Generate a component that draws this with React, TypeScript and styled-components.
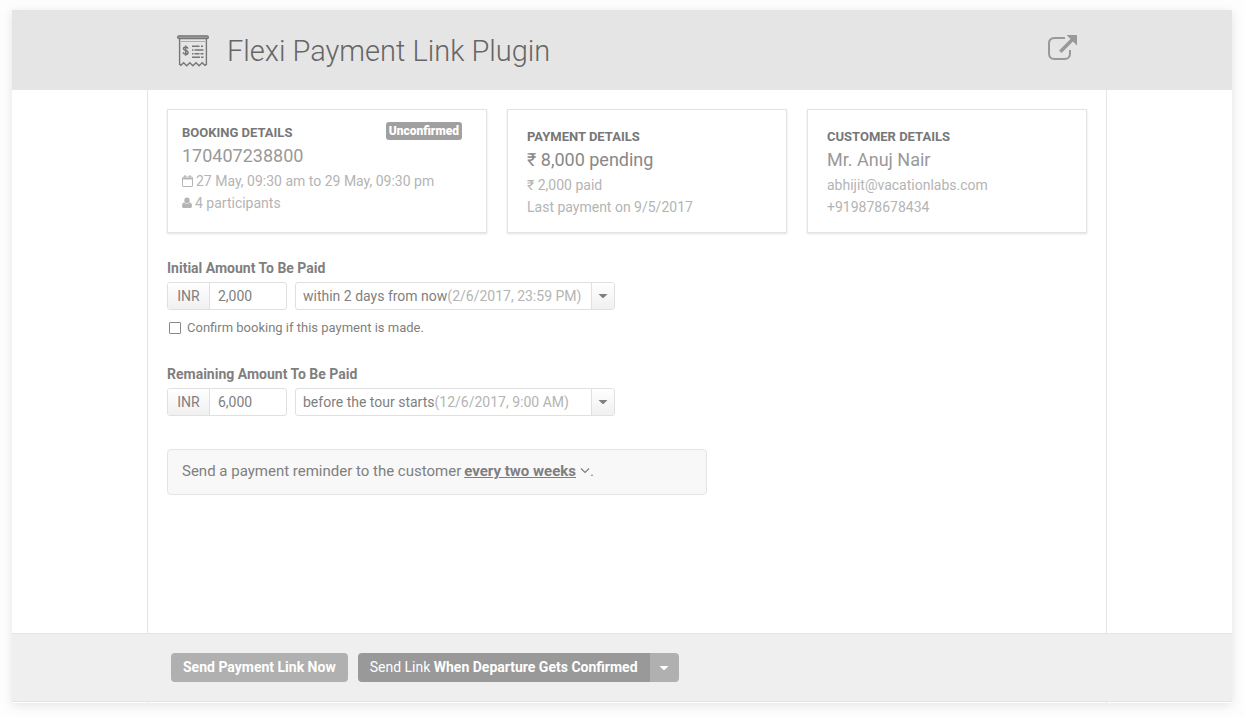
import React, { useRef, useState } from "react";
import styled, { createGlobalStyle } from "styled-components";

const GlobalStyle = createGlobalStyle`
  * { box-sizing: border-box; }
  body {
    margin: 0;
    background: #fdfdfd;
    color: #7f7f7f;
    font-family: Roboto, "Liberation Sans", sans-serif;
    font-size: 14px;
    line-height: 22px;
  }
  h1, h2, p { margin: 0; }
  button, input, select { font: inherit; color: inherit; }
`;

const Shell = styled.div`
  display: flex;
  flex-direction: column;
  min-height: calc(100vh - 24px);
  margin: 10px 12px 14px;
  background: #fff;
  box-shadow: 0 2px 10px rgba(0, 0, 0, 0.1);
`;

const Band = styled.div`
  display: flex;
  justify-content: center;
  padding-left: 10px;
`;

const HeaderBand = styled(Band).attrs({ as: "header" })`
  background: #e5e5e5;
`;

const BodyBand = styled(Band).attrs({ as: "main" })`
  flex: 1;
`;

const FooterBand = styled(Band).attrs({ as: "footer" })`
  background: #efefef;
  border: solid #e4e4e4;
  border-width: 1px 0;
`;

const Column = styled.div`
  width: 100%;
  max-width: 960px;
  border: solid #e4e4e4;
  border-width: 0 1px;
`;

const Content = styled(Column)`
  padding: 19px 19px 40px;
`;

const Tail = styled(Column)`
  height: 1px;
`;

const HeaderRow = styled.div`
  display: flex;
  align-items: center;
  width: 100%;
  max-width: 960px;
  height: 80px;
  padding: 2px 29px 0 30px;
`;

const Title = styled.h1`
  flex: 1;
  margin-left: 18px;
  color: #666;
  font-size: 29px;
  font-weight: 300;
  line-height: 40px;
`;

const OpenLink = styled.a`
  display: block;
  height: 32px;
  color: #999;
`;

const Cards = styled.div`
  display: grid;
  grid-template-columns: 320fr 280fr 280fr;
  gap: 20px;
`;

const Card = styled.section<{ $compact?: boolean }>`
  min-height: 124px;
  padding: ${(p) => (p.$compact ? "12px 14px" : "16px 19px 12px")};
  border: 1px solid #e4e4e4;
  box-shadow: 0 1px 2px rgba(0, 0, 0, 0.12);
`;

const CardHead = styled.div`
  display: flex;
  justify-content: space-between;
  padding-right: 10px;
`;

const CardTitle = styled.h2`
  color: #777;
  font-size: 13px;
  font-weight: 700;
  line-height: 22px;
`;

const Badge = styled.span`
  height: 18px;
  padding: 0 3px;
  border-radius: 3px;
  background: #a0a0a0;
  color: #fff;
  font-size: 12px;
  font-weight: 900;
  line-height: 18px;
`;

const Lead = styled.p<{ $strong?: boolean }>`
  margin-bottom: 2px;
  color: ${(p) => (p.$strong ? "#888" : "#999")};
  font-size: 18px;
  line-height: 24px;
`;

const Detail = styled.p`
  display: flex;
  align-items: center;
  gap: 3px;
  color: #b4b4b4;
`;

const Field = styled.div`
  margin-top: 24px;
`;

const FieldLabel = styled.label`
  display: block;
  margin-bottom: 3px;
  font-weight: 700;
`;

const FieldRow = styled.div`
  display: flex;
  flex-wrap: wrap;
  gap: 8px;
`;

const Group = styled.div<{ $width: number }>`
  display: flex;
  width: ${(p) => p.$width}px;
  height: 28px;
  border: 1px solid #e0e0e0;
  border-radius: 3px;
  background: #fff;
  overflow: hidden;
`;

const Prefix = styled.span`
  width: 42px;
  border-right: 1px solid #e0e0e0;
  background: linear-gradient(#fff, #f0f0f0);
  line-height: 26px;
  text-align: center;
`;

const AmountInput = styled.input`
  flex: 1;
  min-width: 0;
  padding: 0 8px;
  border: 0;
  background: none;
`;

const BareSelect = styled.select`
  appearance: none;
  field-sizing: content;
  padding: 0;
  border: 0;
  background: none;
  cursor: pointer;
`;

const DueSelect = styled(BareSelect)`
  margin-left: 7px;
`;

const DueDate = styled.span`
  flex: 1;
  color: #b4b4b4;
  line-height: 26px;
  white-space: nowrap;
`;

const CaretButton = styled.button`
  display: flex;
  align-items: center;
  justify-content: center;
  width: 23px;
  padding: 0;
  border: 0;
  border-left: 1px solid #e0e0e0;
  background: linear-gradient(#fff, #f0f0f0);
  cursor: pointer;
`;

const CheckRow = styled.label`
  display: flex;
  align-items: center;
  gap: 6px;
  margin: 7px 0 0 2px;
  font-size: 13px;
`;

const CheckBox = styled.input`
  appearance: none;
  width: 12px;
  height: 12px;
  margin: 0;
  border: 1px solid #888;
  border-radius: 1px;
  &:checked { background: #888; }
`;

const Reminder = styled.div`
  display: flex;
  align-items: center;
  max-width: 540px;
  min-height: 46px;
  margin-top: 33px;
  padding: 0 14px 2px;
  border: 1px solid #e4e4e4;
  border-radius: 4px;
  background: #f8f8f8;
  font-size: 15px;
`;

const PeriodSelect = styled(BareSelect)`
  margin: 0 4px 0 3px;
  font-weight: 700;
  text-decoration: underline;
`;

const Actions = styled.div`
  display: flex;
  flex-wrap: wrap;
  align-items: center;
  gap: 10px;
  width: 100%;
  max-width: 960px;
  min-height: 67px;
  padding: 0 24px;
`;

const ActionButton = styled.button<{ $dark?: boolean }>`
  height: 29px;
  padding: 0 12px 2px;
  border: 0;
  border-radius: 4px;
  background: ${(p) => (p.$dark ? "#999" : "#b0b0b0")};
  color: #fff;
  font-weight: ${(p) => (p.$dark ? 400 : 700)};
  cursor: pointer;
`;

const SplitButton = styled.div`
  display: flex;
  border-radius: 4px;
  overflow: hidden;
  & > ${ActionButton} { border-radius: 0; }
`;

const SplitCaret = styled(ActionButton)`
  display: flex;
  align-items: center;
  justify-content: center;
  width: 29px;
  padding: 0;
  border-radius: 0;
`;

const Caret = () => (
  <svg width="10" height="6" viewBox="0 0 10 6" aria-hidden="true">
    <path d="M.5 1h9L5.500 5h-1z" fill="currentColor" />
  </svg>
);

const Chevron = () => (
  <svg width="10" height="8" viewBox="0 0 10 8" aria-hidden="true">
    <path d="M1 1.500l4 3.900 4-3.900" fill="none" stroke="currentColor" strokeWidth="1.2" />
  </svg>
);

const ReceiptIcon = () => (
  <svg width="32" height="32" viewBox="0 0 32 32" fill="none" stroke="#777" aria-hidden="true">
    <rect x=".6" y=".8" width="30.800" height="2.800" rx="1.400" fill="#999" strokeWidth="1.200" />
    <path d="M2.600 3.500v25.800l1.300 1 2.700-2.500 3.100 3 3.100-3 3.100 3 3.100-3 3.100 3 3.100-3 2.700 2.500 1.500-1V3.500" strokeWidth="1.400" />
    <path d="M4.500 6.500h24" strokeDasharray="1 1" strokeWidth="1.200" />
    <path d="M15 11.200h7.500M24 11.200h2M15 15h1.500M17.500 15h9M15 18.700h1.500M17.500 18.700h5M23.500 18.700h3M15 22.300h8M24 22.300h2.500" strokeWidth="1.500" />
    <path d="M11 13.700c-.2-1.200-1.100-1.700-2.300-1.700-1.300 0-2.200.7-2.200 1.800 0 2.500 4.600 1 4.600 3.600 0 1.100-1 1.800-2.300 1.800-1.400 0-2.400-.7-2.500-2M8.700 10.500v10.200" strokeWidth="1.500" />
  </svg>
);

const ExternalIcon = () => (
  <svg width="30" height="32" viewBox="0 0 30 32" fill="none" stroke="currentColor" aria-hidden="true">
    <path d="M17 3H6.500Q1 3 1 8.500v10Q1 24 6.500 24h10q5.500 0 5.500-5.500V15" strokeWidth="2" />
    <path d="M12.300 16.700L25 4" strokeWidth="3.400" />
    <path d="M18.500 0h10.500v10.500z" fill="currentColor" stroke="none" />
  </svg>
);

const CalendarIcon = () => (
  <svg width="11" height="12" viewBox="0 0 11 12" fill="none" stroke="currentColor" aria-hidden="true">
    <rect x=".5" y="2" width="10" height="9.500" rx=".6" />
    <path d="M.5 3.700h10" strokeWidth="1.500" />
    <path d="M3 .3v2.500M8 .3v2.500" strokeWidth="1.500" />
  </svg>
);

const PersonIcon = () => (
  <svg width="10" height="12" viewBox="0 0 10 12" fill="currentColor" aria-hidden="true">
    <ellipse cx="5" cy="3.400" rx="2.700" ry="2.900" />
    <path d="M2.300 5.400C.7 5.600 0 7 0 8.900 0 10.200.8 11 1.900 11h6.200C9.200 11 10 10.200 10 8.900 10 7 9.300 5.600 7.700 5.400 7 6.300 6 6.800 5 6.800S3 6.300 2.300 5.400z" />
  </svg>
);

type Choice = { label: string; date: string };

type AmountFieldProps = {
  id: string;
  label: string;
  amount: string;
  choices: Choice[];
  children?: React.ReactNode;
};

function AmountField({ id, label, amount, choices, children }: AmountFieldProps) {
  const [index, setIndex] = useState(0);
  const selectRef = useRef<HTMLSelectElement>(null);
  return (
    <Field>
      <FieldLabel htmlFor={id}>{label}</FieldLabel>
      <FieldRow>
        <Group $width={120}>
          <Prefix>INR</Prefix>
          <AmountInput id={id} type="text" inputMode="numeric" defaultValue={amount} />
        </Group>
        <Group $width={320}>
          <DueSelect
            ref={selectRef}
            aria-label={`${label}: due date`}
            value={index}
            onChange={(e) => setIndex(Number(e.target.value))}
          >
            {choices.map((c, i) => (
              <option key={c.label} value={i}>{c.label}</option>
            ))}
          </DueSelect>
          <DueDate>({choices[index].date})</DueDate>
          <CaretButton type="button" aria-label="Choose due date" onClick={() => selectRef.current?.showPicker()}>
            <Caret />
          </CaretButton>
        </Group>
      </FieldRow>
      {children}
    </Field>
  );
}

export default function App() {
  return (
    <>
      <GlobalStyle />
      <Shell>
        <HeaderBand>
          <HeaderRow>
            <ReceiptIcon />
            <Title>Flexi Payment Link Plugin</Title>
            <OpenLink href="#" aria-label="Open in new window">
              <ExternalIcon />
            </OpenLink>
          </HeaderRow>
        </HeaderBand>

        <BodyBand>
          <Content>
            <Cards>
              <Card $compact>
                <CardHead>
                  <CardTitle>BOOKING DETAILS</CardTitle>
                  <Badge>Unconfirmed</Badge>
                </CardHead>
                <Lead>170407238800</Lead>
                <Detail><CalendarIcon />27 May, 09:30 am to 29 May, 09:30 pm</Detail>
                <Detail><PersonIcon />4 participants</Detail>
              </Card>
              <Card>
                <CardTitle>PAYMENT DETAILS</CardTitle>
                <Lead $strong>₹ 8,000 pending</Lead>
                <Detail>₹ 2,000 paid</Detail>
                <Detail>Last payment on 9/5/2017</Detail>
              </Card>
              <Card>
                <CardTitle>CUSTOMER DETAILS</CardTitle>
                <Lead>Mr. Anuj Nair</Lead>
                <Detail>abhijit@vacationlabs.com</Detail>
                <Detail>+919878678434</Detail>
              </Card>
            </Cards>

            <AmountField
              id="initial"
              label="Initial Amount To Be Paid"
              amount="2,000"
              choices={[{ label: "within 2 days from now", date: "2/6/2017, 23:59 PM" }]}
            >
              <CheckRow>
                <CheckBox type="checkbox" />
                Confirm booking if this payment is made.
              </CheckRow>
            </AmountField>

            <AmountField
              id="remaining"
              label="Remaining Amount To Be Paid"
              amount="6,000"
              choices={[{ label: "before the tour starts", date: "12/6/2017, 9:00 AM" }]}
            />

            <Reminder>
              <label htmlFor="period">Send a payment reminder to the customer</label>
              <PeriodSelect id="period">
                <option>every two weeks</option>
              </PeriodSelect>
              <Chevron />
              <span>.</span>
            </Reminder>
          </Content>
        </BodyBand>

        <FooterBand>
          <Actions>
            <ActionButton type="button">Send Payment Link Now</ActionButton>
            <SplitButton>
              <ActionButton type="button" $dark>
                Send Link <b>When Departure Gets Confirmed</b>
              </ActionButton>
              <SplitCaret type="button" aria-label="More sending options">
                <Caret />
              </SplitCaret>
            </SplitButton>
          </Actions>
        </FooterBand>
        <Band>
          <Tail />
        </Band>
      </Shell>
    </>
  );
}
